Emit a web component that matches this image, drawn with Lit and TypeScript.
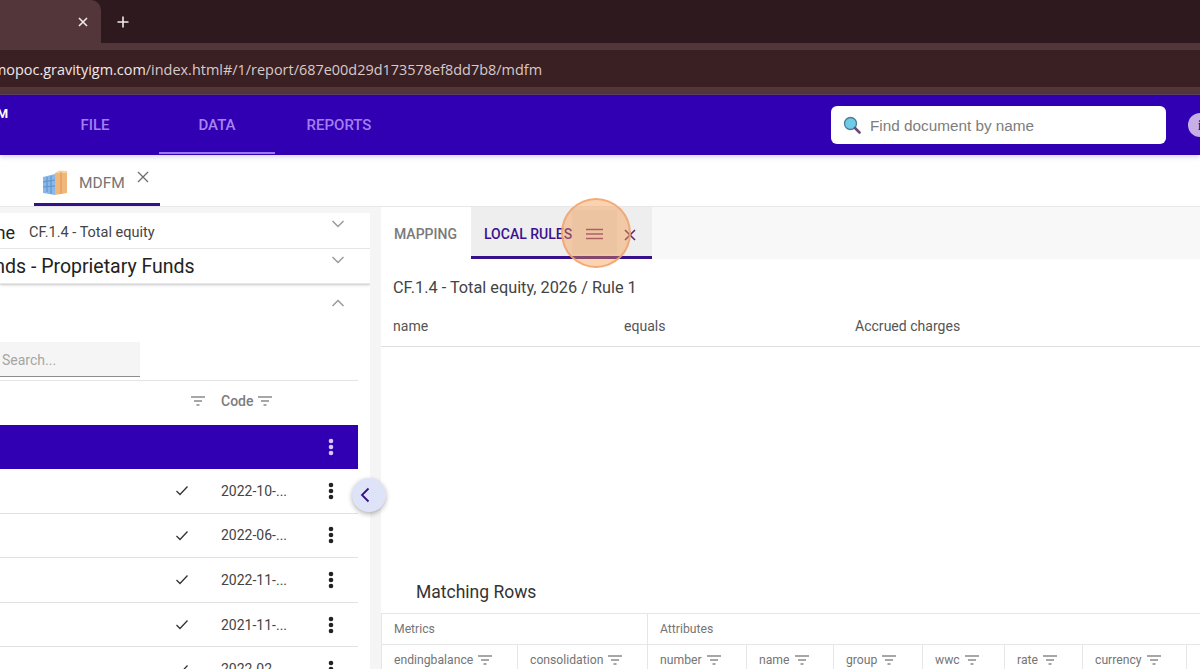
import { LitElement, html, css, svg } from "lit";
import { customElement } from "lit/decorators.js";

const filterIcon = html`<svg class="filter" width="14" height="10" viewBox="0 0 14 10"><path d="M0 1h14M3 5h8M5.500 9h3" stroke="#8a8a8a" stroke-width="1.300" fill="none"/></svg>`;

const chevron = (up: boolean) => html`<svg class="chev" width="14" height="8" viewBox="0 0 14 8"><path d=${up ? "M1.500 7L7 1.500 12.500 7" : "M1.500 1L7 6.500 12.500 1"} stroke="#9a9a9a" stroke-width="1.500" fill="none"/></svg>`;

const kebab = (color: string) => html`<svg width="6" height="18" viewBox="0 0 6 18"><g fill=${color}><circle cx="3" cy="3" r="2.300"/><circle cx="3" cy="9" r="2.300"/><circle cx="3" cy="15" r="2.300"/></g></svg>`;

const building = svg`
  <path d="M0 7l12-3v21l-12-2z" fill="#8ab8e6"/>
  <path d="M4 7v15M8 6v18M0 12l12-2M0 17l12-1" stroke="#5d93d0" stroke-width="1.100" fill="none"/>
  <path d="M12 3l12-2v22l-12 2z" fill="#f0b77c"/>
  <path d="M12 3l4-2.500 8 .500-1 2z" fill="#f6d2a6"/>
  <path d="M18 2v22" stroke="#e09a58" stroke-width="1.200"/>
`;

const columns = [
  { name: "endingbalance", w: 137 },
  { name: "consolidation", w: 130 },
  { name: "number", w: 99 },
  { name: "name", w: 87 },
  { name: "group", w: 89 },
  { name: "wwc", w: 82 },
  { name: "rate", w: 78 },
  { name: "currency", w: 104 },
  { name: "", w: 14 },
];

const dates = ["2022-10-...", "2022-06-...", "2022-11-...", "2021-11-...", "2022-02-..."];

@customElement("app-root")
export class AppRoot extends LitElement {
  static styles = css`
    :host {
      display: block;
      height: 669px;
      overflow: hidden;
      font-family: Roboto, sans-serif;
      background: #f5f5f5;
      color: #333;
    }
    .strip {
      height: 43px;
      background: #2e1a1e;
      display: flex;
      align-items: stretch;
      color: #f0e6e6;
    }
    .browser-tab {
      width: 101px;
      height: 43px;
      box-sizing: border-box;
      background: #523639;
      border-top-right-radius: 10px;
      display: flex;
      align-items: center;
      justify-content: flex-end;
      padding-right: 12px;
    }
    .plus {
      margin-left: 15px;
      display: flex;
      align-items: center;
    }
    .toolbar {
      background: #523639;
      padding: 7px 0;
      height: 37px;
      border-bottom: 1px solid #5b3f5c;
    }
    .url {
      height: 37px;
      box-sizing: border-box;
      padding-top: 1px;
      background: #3a2023;
      display: flex;
      align-items: center;
      overflow: hidden;
      font: 14.450px "Open Sans", sans-serif;
      color: #d8c9c9;
      white-space: nowrap;
    }
    .url span {
      margin-left: -24px;
    }
    .url b {
      font-weight: 400;
      color: #f1e8e8;
    }
    .appbar {
      height: 60px;
      background: #3200b3;
      display: flex;
      align-items: stretch;
      position: relative;
      box-shadow: 0 2px 5px rgba(60, 40, 160, 0.2);
      z-index: 2;
    }
    .logo {
      position: absolute;
      left: -16px;
      top: 11px;
      font: 700 13px Roboto, sans-serif;
      color: #fff;
    }
    .nav {
      display: flex;
      gap: 6px;
      padding-left: 37px;
    }
    .nav div {
      width: 116px;
      height: 59px;
      box-sizing: border-box;
      padding-top: 3px;
      display: flex;
      align-items: center;
      justify-content: center;
      font-size: 15px;
      font-weight: 500;
      color: #a27ff0;
      border-bottom: 2px solid transparent;
    }
    .nav div.on {
      border-bottom-color: #9c78ee;
      color: #a585f2;
    }
    .search {
      margin-left: auto;
      margin-top: 11px;
      width: 335px;
      height: 38px;
      box-sizing: border-box;
      background: #fff;
      border-radius: 6px;
      display: flex;
      align-items: center;
      gap: 9px;
      padding-left: 12px;
      font: 15.300px "Liberation Sans", sans-serif;
      color: #7d7d7d;
    }
    .search span {
      padding-top: 1px;
    }
    .info {
      margin: 18px -12px 0 22px;
      width: 24px;
      height: 24px;
      border-radius: 50%;
      background: #c6aee6;
      color: #3200b3;
      font: 700 15px "Liberation Serif", serif;
      display: flex;
      justify-content: center;
      align-items: center;
      flex: none;
    }
    .doc-tabs {
      height: 51px;
      background: #fff;
      border-bottom: 1px solid #e8e8e8;
      padding-left: 34px;
      display: flex;
    }
    .doc-tab {
      width: 126px;
      height: 51px;
      box-sizing: border-box;
      border-bottom: 3px solid #35108a;
      display: flex;
      align-items: center;
      gap: 11px;
      padding: 7px 0 0 8px;
      color: #757575;
      font-size: 15.500px;
      position: relative;
    }
    .doc-tab .close {
      position: absolute;
      left: 102px;
      top: 15px;
    }
    .main {
      display: flex;
      align-items: flex-start;
      position: relative;
    }
    .left {
      width: 370px;
      height: 462px;
      padding-top: 6px;
      box-sizing: border-box;
      flex: none;
    }
    .acc {
      background: #fff;
      height: 35px;
      display: flex;
      align-items: center;
      position: relative;
      white-space: nowrap;
      overflow: hidden;
      border-bottom: 1px solid #e6e6e6;
    }
    .acc .chev {
      position: absolute;
      left: 331px;
      top: 7px;
    }
    .acc1 {
      padding-top: 3px;
      height: 32px;
    }
    .acc1 .big {
      font-size: 18px;
      color: #222;
      margin-left: -33px;
    }
    .acc1 .small {
      font-size: 14.500px;
      margin-left: 14px;
      color: #444;
    }
    .acc2 {
      height: 34px;
      box-shadow: 0 1px 3px rgba(0, 0, 0, 0.2);
      z-index: 1;
      overflow: visible;
      clip-path: inset(0 0 -4px 0);
      border-bottom: 1px solid #e8e8e8;
    }
    .acc2 span {
      font-size: 19.500px;
      color: #222;
      margin-left: -27px;
    }
    .body {
      background: #fff;
      height: 400px;
      margin-top: 1px;
      position: relative;
      padding-right: 12px;
    }
    .body .chev {
      position: absolute;
      left: 331px;
      top: 14px;
    }
    .search-row {
      padding-top: 57px;
      height: 38px;
      border-bottom: 1px solid #e4e4e4;
    }
    .mini-search {
      width: 140px;
      height: 35px;
      box-sizing: border-box;
      background: #f5f5f5;
      border-bottom: 1px solid #8c8c8c;
      font-size: 14px;
      color: #a5a5a5;
      display: flex;
      align-items: center;
      padding: 2px 0 0 2px;
    }
    .grid-row {
      display: grid;
      grid-template-columns: 174px 47px 1fr 25px 14.500px;
      align-items: center;
      height: 44.600px;
      box-sizing: border-box;
      border-bottom: 1px solid #e2e2e2;
      font-size: 14px;
      color: #444;
    }
    .grid-row.head {
      height: 44px;
      padding-bottom: 4px;
      border-bottom: none;
      color: #7d7d7d;
      font-weight: 500;
    }
    .grid-row.head .code {
      display: flex;
      align-items: center;
      gap: 5px;
    }
    .grid-row.head .cf {
      padding-left: 17px;
    }
    .grid-row.sel {
      height: 44px;
      background: #3200b3;
      border-bottom: none;
    }
    .check {
      padding-left: 1px;
      display: flex;
    }
    .kb {
      display: flex;
      justify-content: center;
    }
    .collapse {
      position: absolute;
      left: 352px;
      top: 271px;
      width: 34px;
      height: 34px;
      box-sizing: border-box;
      padding-right: 8px;
      border-radius: 50%;
      background: #dfe3f8;
      box-shadow: 0 2px 5px rgba(0, 0, 0, 0.3);
      display: flex;
      align-items: center;
      justify-content: center;
      z-index: 3;
    }
    .gutter {
      width: 11px;
      flex: none;
    }
    .right {
      flex: 1;
      height: 462px;
      background: #fff;
      min-width: 0;
      overflow: hidden;
      display: flex;
      flex-direction: column;
    }
    .tabs {
      height: 52px;
      background: #f8f8f8;
      display: flex;
      flex: none;
    }
    .tab {
      display: flex;
      align-items: center;
      font-size: 14px;
      font-weight: 500;
      box-sizing: border-box;
      height: 52px;
    }
    .tab.map {
      width: 90px;
      background: #fff;
      color: #7a7a7a;
      padding: 2px 0 0 13px;
    }
    .tab.rules {
      width: 181px;
      background: #eeeeee;
      color: #3a1190;
      padding-left: 13px;
      border-bottom: 3px solid #35108a;
    }
    .tab.rules .label {
      padding-top: 4px;
    }
    .menu {
      width: 45px;
      height: 44px;
      flex: none;
      display: flex;
      align-items: center;
      justify-content: center;
      background: #e6e6e6;
      padding-top: 4px;
      box-sizing: border-box;
    }
    .tab.rules .x {
      margin-left: 6px;
      margin-top: 6px;
    }
    .rule-title {
      flex: none;
      font-size: 16.300px;
      color: #444;
      padding: 19px 0 0 12px;
      height: 24px;
    }
    .rule-row {
      flex: none;
      display: grid;
      grid-template-columns: 231px 231px 1fr;
      padding: 0 0 2px 12px;
      margin-top: 5px;
      height: 40px;
      box-sizing: border-box;
      align-items: center;
      font-size: 14.050px;
      color: #555;
      border-bottom: 1px solid #dedede;
    }
    .matching {
      font-size: 17.500px;
      color: #333;
      padding: 235px 0 0 35px;
      height: 31px;
      flex: none;
      line-height: 21px;
    }
    .table {
      border-top: 1px solid #e6e6e6;
      flex: none;
    }
    .groups {
      display: flex;
      height: 30px;
      border-bottom: 1px solid #e6e6e6;
      font-size: 12.200px;
      color: #757575;
    }
    .groups div {
      display: flex;
      align-items: center;
      padding: 0 0 1px 12px;
      box-sizing: border-box;
    }
    .groups .metrics {
      width: 267px;
      border-right: 1px solid #e6e6e6;
      border-left: 1px solid #e6e6e6;
    }
    .cols {
      display: flex;
      height: 30px;
      font-size: 12.200px;
      color: #757575;
      white-space: nowrap;
    }
    .cols div {
      display: flex;
      align-items: center;
      gap: 5px;
      padding-left: 12px;
      box-sizing: border-box;
      border-right: 1px solid #e6e6e6;
      flex: none;
      height: 30px;
    }
    .cols div:first-child {
      border-left: 1px solid #e6e6e6;
    }
    .cols .filter {
      flex: none;
    }
    .spot {
      position: absolute;
      left: 561px;
      top: -9px;
      width: 70px;
      height: 70px;
      box-sizing: border-box;
      border-radius: 50%;
      background: rgba(245, 150, 70, 0.42);
      border: 2px solid rgba(240, 165, 110, 0.85);
      z-index: 4;
    }
  `;

  render() {
    return html`
      <div class="strip">
        <div class="browser-tab">
          <svg width="12" height="12" viewBox="0 0 12 12"><path d="M2 2l8 8M10 2l-8 8" stroke="#f2e9e9" stroke-width="1.600"/></svg>
        </div>
        <div class="plus">
          <svg width="14" height="14" viewBox="0 0 14 14"><path d="M7 1.500v11M1.500 7h11" stroke="#f2e9e9" stroke-width="1.600"/></svg>
        </div>
      </div>
      <div class="toolbar">
        <div class="url"><span><b>demopoc.gravityigm.com</b>/index.html#/1/report/687e00d29d173578ef8dd7b8/mdfm</span></div>
      </div>
      <div class="appbar">
        <div class="logo">IGM</div>
        <div class="nav">
          <div>FILE</div>
          <div class="on">DATA</div>
          <div>REPORTS</div>
        </div>
        <div class="search">
          <svg width="18" height="18" viewBox="0 0 18 18">
            <circle cx="7.500" cy="7.500" r="6" fill="#6fcbe8" stroke="#4a7d92" stroke-width="1.300"/>
            <path d="M12 12l4.500 4.500" stroke="#6b4a78" stroke-width="2.600" stroke-linecap="round"/>
          </svg>
          <span>Find document by name</span>
        </div>
        <div class="info">i</div>
      </div>
      <div class="doc-tabs">
        <div class="doc-tab">
          <svg width="26" height="26" viewBox="0 0 24 26">${building}</svg>
          <span>MDFM</span>
          <svg class="close" width="14" height="14" viewBox="0 0 14 14"><path d="M2 2l10 10M12 2L2 12" stroke="#6e6e6e" stroke-width="1.300"/></svg>
        </div>
      </div>
      <div class="main">
        <div class="left">
          <div class="acc acc1">
            <span class="big">Name</span><span class="small">CF.1.4 - Total equity</span>
            ${chevron(false)}
          </div>
          <div class="acc acc2">
            <span>Funds - Proprietary Funds</span>
            ${chevron(false)}
          </div>
          <div class="body">
            ${chevron(true)}
            <div class="search-row"><div class="mini-search">Search...</div></div>
            <div class="grid-row head">
              <span></span>
              <span class="cf">${filterIcon}</span>
              <span class="code">Code ${filterIcon}</span>
              <span></span>
            </div>
            <div class="grid-row sel">
              <span></span><span></span><span></span>
              <span class="kb">${kebab("#d9c8ff")}</span>
            </div>
            ${dates.map(
              (d) => html`
                <div class="grid-row">
                  <span></span>
                  <span class="check">
                    <svg width="14" height="11" viewBox="0 0 14 11"><path d="M1.500 6l3.500 3.500 7.500-8" stroke="#333" stroke-width="1.300" fill="none"/></svg>
                  </span>
                  <span>${d}</span>
                  <span class="kb">${kebab("#222")}</span>
                </div>
              `
            )}
          </div>
        </div>
        <div class="collapse">
          <svg width="10" height="16" viewBox="0 0 10 16"><path d="M8.500 1.500L2 8l6.500 6.500" stroke="#35108a" stroke-width="1.800" fill="none"/></svg>
        </div>
        <div class="gutter"></div>
        <div class="right">
          <div class="tabs">
            <div class="tab map">MAPPING</div>
            <div class="tab rules">
              <span class="label">LOCAL RULES</span>
              <span class="menu">
                <svg width="17" height="12" viewBox="0 0 17 12"><path d="M0 1.500h17M0 6h17M0 10.500h17" stroke="#7a3a7a" stroke-width="1.600"/></svg>
              </span>
              <svg class="x" width="14" height="14" viewBox="0 0 14 14"><path d="M2 2l10 10M12 2L2 12" stroke="#5c2a70" stroke-width="1.600"/></svg>
            </div>
          </div>
          <div class="rule-title">CF.1.4 - Total equity, 2026 / Rule 1</div>
          <div class="rule-row"><span>name</span><span>equals</span><span>Accrued charges</span></div>
          <div class="matching">Matching Rows</div>
          <div class="table">
            <div class="groups">
              <div class="metrics">Metrics</div>
              <div>Attributes</div>
            </div>
            <div class="cols">
              ${columns.map(
                (c) => html`<div style="width:${c.w}px">${c.name}${c.name ? filterIcon : ""}</div>`
              )}
            </div>
          </div>
        </div>
        <div class="spot"></div>
      </div>
    `;
  }
}
